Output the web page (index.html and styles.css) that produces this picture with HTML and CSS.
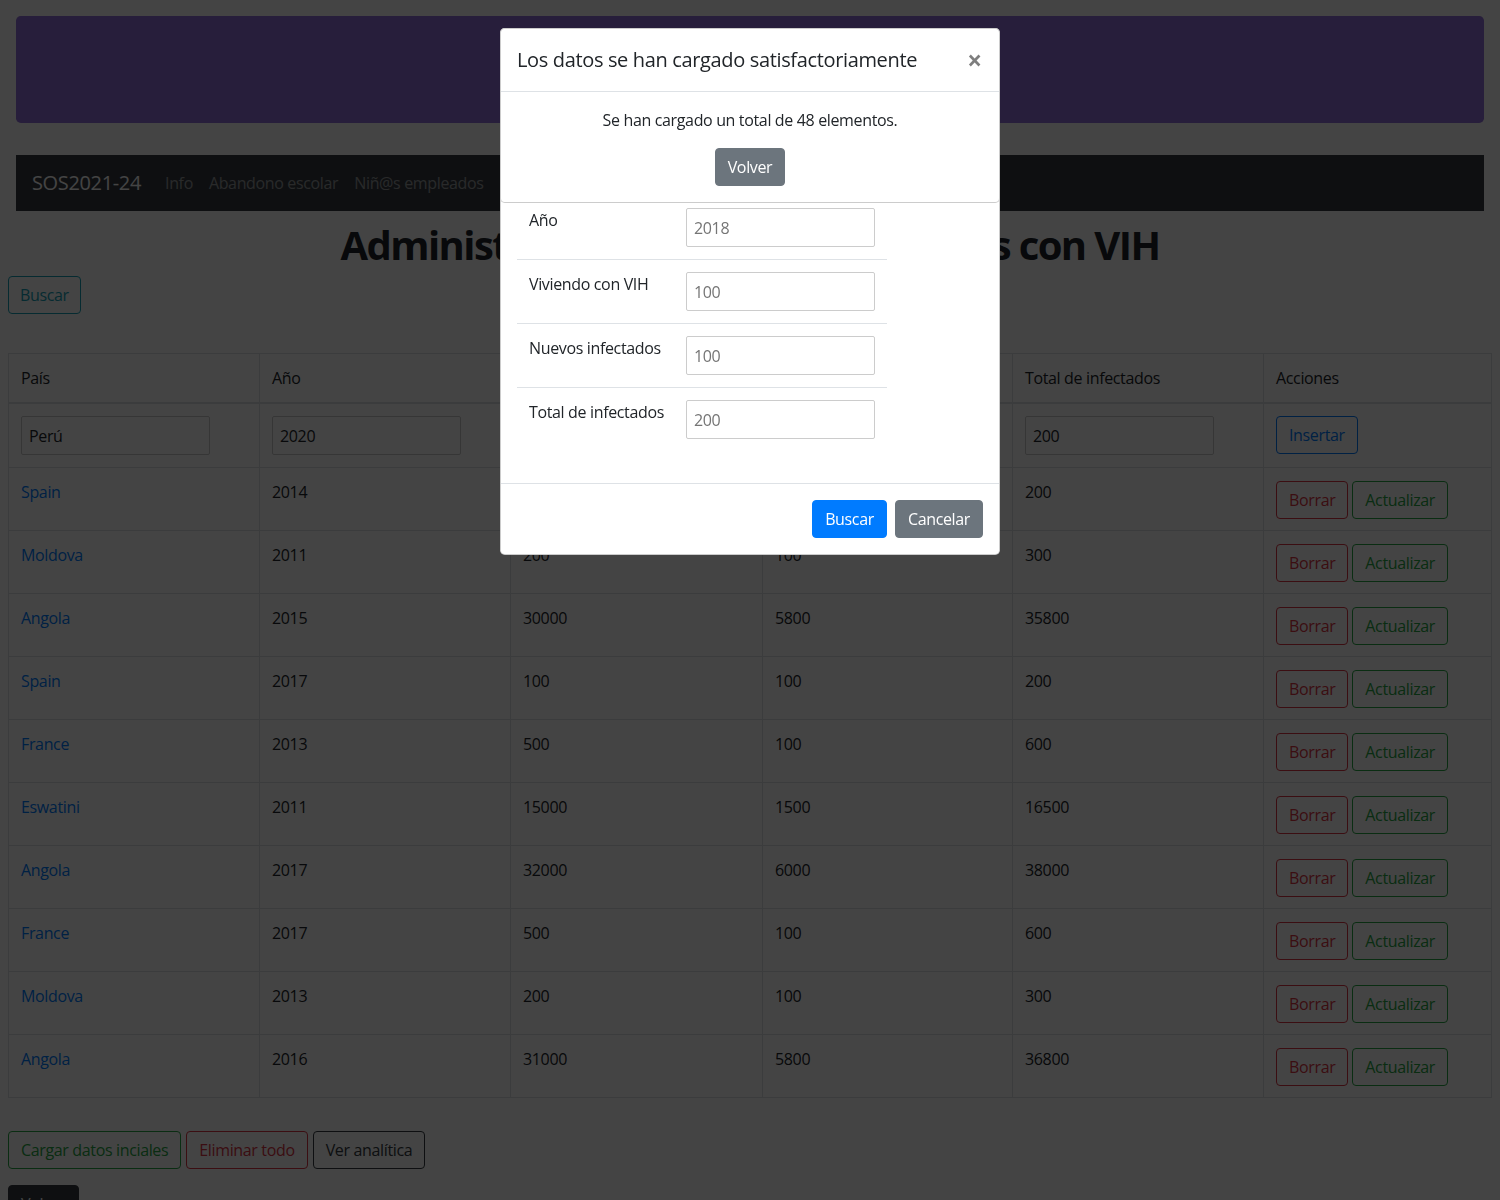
FILE: index.html
```html
<!DOCTYPE html>
<html lang="es">
<head>
<meta charset="utf-8">
<title>SOS2021-24 - Personas con VIH</title>
<link rel="stylesheet" href="styles.css">
</head>
<body>
<main class="page">
  <div class="jumbotron"></div>
  <nav class="navbar">
    <a class="brand" href="#">SOS2021-24</a>
    <a class="nav-link" href="#">Info</a>
    <a class="nav-link" href="#">Abandono escolar</a>
    <a class="nav-link" href="#">Niñ@s empleados</a>
    <a class="nav-link" href="#">Infectados de VIH</a>
  </nav>
  <h1 class="title">Administrador de datos de personas con VIH</h1>
  <button class="btn btn-outline-info search-btn">Buscar</button>

  <table class="data-table">
    <colgroup>
      <col style="width:251px"><col style="width:251px"><col style="width:252px"><col style="width:250px"><col style="width:251px"><col>
    </colgroup>
    <thead>
      <tr><th>País</th><th>Año</th><th>Viviendo con VIH</th><th>Nuevos infectados</th><th>Total de infectados</th><th>Acciones</th></tr>
    </thead>
    <tbody>
      <tr class="input-row">
        <td><input class="field" value="Perú"></td>
        <td><input class="field" value="2020"></td>
        <td><input class="field" value="100"></td>
        <td><input class="field" value="100"></td>
        <td><input class="field" value="200"></td>
        <td><button class="btn btn-outline-primary">Insertar</button></td>
      </tr>
      <tr><td><a href="#">Spain</a></td><td>2014</td><td>100</td><td>100</td><td>200</td><td class="actions"><button class="btn btn-outline-danger">Borrar</button><button class="btn btn-outline-success">Actualizar</button></td></tr>
      <tr><td><a href="#">Moldova</a></td><td>2011</td><td>200</td><td>100</td><td>300</td><td class="actions"><button class="btn btn-outline-danger">Borrar</button><button class="btn btn-outline-success">Actualizar</button></td></tr>
      <tr><td><a href="#">Angola</a></td><td>2015</td><td>30000</td><td>5800</td><td>35800</td><td class="actions"><button class="btn btn-outline-danger">Borrar</button><button class="btn btn-outline-success">Actualizar</button></td></tr>
      <tr><td><a href="#">Spain</a></td><td>2017</td><td>100</td><td>100</td><td>200</td><td class="actions"><button class="btn btn-outline-danger">Borrar</button><button class="btn btn-outline-success">Actualizar</button></td></tr>
      <tr><td><a href="#">France</a></td><td>2013</td><td>500</td><td>100</td><td>600</td><td class="actions"><button class="btn btn-outline-danger">Borrar</button><button class="btn btn-outline-success">Actualizar</button></td></tr>
      <tr><td><a href="#">Eswatini</a></td><td>2011</td><td>15000</td><td>1500</td><td>16500</td><td class="actions"><button class="btn btn-outline-danger">Borrar</button><button class="btn btn-outline-success">Actualizar</button></td></tr>
      <tr><td><a href="#">Angola</a></td><td>2017</td><td>32000</td><td>6000</td><td>38000</td><td class="actions"><button class="btn btn-outline-danger">Borrar</button><button class="btn btn-outline-success">Actualizar</button></td></tr>
      <tr><td><a href="#">France</a></td><td>2017</td><td>500</td><td>100</td><td>600</td><td class="actions"><button class="btn btn-outline-danger">Borrar</button><button class="btn btn-outline-success">Actualizar</button></td></tr>
      <tr><td><a href="#">Moldova</a></td><td>2013</td><td>200</td><td>100</td><td>300</td><td class="actions"><button class="btn btn-outline-danger">Borrar</button><button class="btn btn-outline-success">Actualizar</button></td></tr>
      <tr><td><a href="#">Angola</a></td><td>2016</td><td>31000</td><td>5800</td><td>36800</td><td class="actions"><button class="btn btn-outline-danger">Borrar</button><button class="btn btn-outline-success">Actualizar</button></td></tr>
    </tbody>
  </table>

  <div class="bottom-actions">
    <button class="btn btn-outline-success">Cargar datos inciales</button>
    <button class="btn btn-outline-danger">Eliminar todo</button>
    <button class="btn btn-outline-dark">Ver analítica</button>
  </div>
  <button class="btn btn-dark back-btn">Volver</button>
</main>

<div class="backdrop"></div>

<div class="modal-layer">
  <div class="modal-stack">
    <section class="modal-content search-modal">
      <div class="modal-body search-body">
        <table class="search-table">
          <colgroup><col class="label-col"><col class="input-col"></colgroup>
          <tr><td>Año</td><td><input class="field" placeholder="2018"></td></tr>
          <tr><td>Viviendo con VIH</td><td><input class="field" placeholder="100"></td></tr>
          <tr><td>Nuevos infectados</td><td><input class="field" placeholder="100"></td></tr>
          <tr><td>Total de infectados</td><td><input class="field" placeholder="200"></td></tr>
        </table>
      </div>
      <footer class="modal-footer">
        <button class="btn btn-primary">Buscar</button>
        <button class="btn btn-secondary">Cancelar</button>
      </footer>
    </section>

    <section class="modal-content success-modal">
      <header class="modal-header">
        <h5 class="modal-title">Los datos se han cargado satisfactoriamente</h5>
        <button class="close">×</button>
      </header>
      <div class="modal-body success-body">
        <p>Se han cargado un total de 48 elementos.</p>
        <button class="btn btn-secondary">Volver</button>
      </div>
    </section>
  </div>
</div>
</body>
</html>
```

FILE: styles.css
```css
* { box-sizing: border-box; }

html, body { margin: 0; }

body {
  padding: 8px;
  background: #fff;
  color: #212529;
  font-family: "Open Sans", "Noto Sans", "Liberation Sans", sans-serif;
  font-size: 16px;
  line-height: 1.5;
  letter-spacing: -0.022em;
}

a { color: #007bff; text-decoration: none; }

.jumbotron {
  height: 107px;
  margin: 8px 8px 32px;
  background: #9370db;
  border-radius: 4.8px;
}

.navbar {
  display: flex;
  align-items: center;
  height: 56px;
  margin: 0 8px;
  padding: 8px 16px;
  background: #343a40;
}

.brand {
  color: #fff;
  font-size: 20px;
  line-height: 30px;
  margin-right: 16px;
}

.nav-link {
  color: rgba(255, 255, 255, 0.5);
  padding: 8px;
  line-height: 24px;
}

.title {
  margin: 10px 0 7px;
  text-align: center;
  font-size: 40px;
  line-height: 48px;
  font-weight: 700;
  letter-spacing: -0.04em;
}

/* Buttons */
.btn {
  display: inline-block;
  height: 38px;
  padding: 6px 12px;
  border: 1px solid transparent;
  border-radius: 4px;
  background: transparent;
  font-family: inherit;
  font-size: 16px;
  line-height: 24px;
  letter-spacing: inherit;
  cursor: pointer;
  white-space: nowrap;
}
.btn-outline-info { color: #17a2b8; border-color: #17a2b8; }
.btn-outline-primary { color: #007bff; border-color: #007bff; }
.btn-outline-danger { color: #dc3545; border-color: #dc3545; }
.btn-outline-success { color: #28a745; border-color: #28a745; }
.btn-outline-dark { color: #343a40; border-color: #343a40; }
.btn-primary { color: #fff; background: #007bff; border-color: #007bff; }
.btn-secondary { color: #fff; background: #6c757d; border-color: #6c757d; }
.btn-dark { color: #fff; background: #343a40; border-color: #343a40; }

.search-btn { display: block; margin-bottom: 39px; padding: 6px 11px; }

.field {
  display: block;
  width: 189px;
  height: 39px;
  margin: 0;
  padding: 0 7px;
  border: 1px solid #ccc;
  border-radius: 2px;
  font-family: inherit;
  font-size: 16px;
  letter-spacing: inherit;
  color: #212529;
  background: #fff;
}
.field::placeholder { color: #757575; }

/* Main table */
.data-table {
  width: 100%;
  border-collapse: collapse;
  table-layout: fixed;
  margin-bottom: 33px;
}
.data-table th,
.data-table td {
  border: 1px solid #dee2e6;
  padding: 12px;
  text-align: left;
  vertical-align: top;
  font-weight: 400;
}
.data-table thead th { border-bottom-width: 2px; }
.data-table td.actions { padding-top: 13px; padding-bottom: 11px; }
.actions .btn + .btn { margin-left: 4px; }

.bottom-actions {
  display: flex;
  gap: 5px;
  margin-bottom: 16px;
}

.back-btn { display: block; }

/* Overlay + modals */
.backdrop {
  position: fixed;
  inset: 0;
  background: rgba(0, 0, 0, 0.735);
}

.modal-layer {
  position: fixed;
  inset: 0;
  display: flex;
  justify-content: center;
  align-items: flex-start;
  padding-top: 28px;
}

.modal-stack {
  display: grid;
  width: 500px;
}

.modal-content {
  grid-area: 1 / 1;
  align-self: start;
  background: #fff;
  border: 1px solid rgba(0, 0, 0, 0.2);
  border-radius: 4.8px;
  color: #212529;
}

.modal-header {
  display: flex;
  align-items: flex-start;
  justify-content: space-between;
  padding: 16px;
  border-bottom: 1px solid #dee2e6;
}

.modal-title {
  margin: 0;
  font-size: 20px;
  line-height: 30px;
  font-weight: 500;
}

.close {
  margin: -16px -16px -16px auto;
  padding: 16px 17px 16px 16px;
  border: 0;
  background: transparent;
  font-family: "Open Sans", sans-serif;
  font-size: 26px;
  font-weight: 700;
  line-height: 30px;
  color: #000;
  opacity: 0.5;
}

.modal-body { padding: 16px; }

.success-body { text-align: center; }
.success-body p { margin: 0 0 16px; }

.search-body { padding-top: 166px; }

.search-table {
  width: 370px;
  border-collapse: collapse;
  table-layout: fixed;
  margin-bottom: 16px;
}
.label-col { width: 157px; }
.input-col { width: 213px; }
.search-table td {
  border-top: 1px solid #dee2e6;
  padding: 12px;
  vertical-align: top;
  white-space: nowrap;
}

.modal-footer {
  display: flex;
  justify-content: flex-end;
  padding: 12px;
  border-top: 1px solid #dee2e6;
}
.modal-footer .btn { margin: 4px; }
```
